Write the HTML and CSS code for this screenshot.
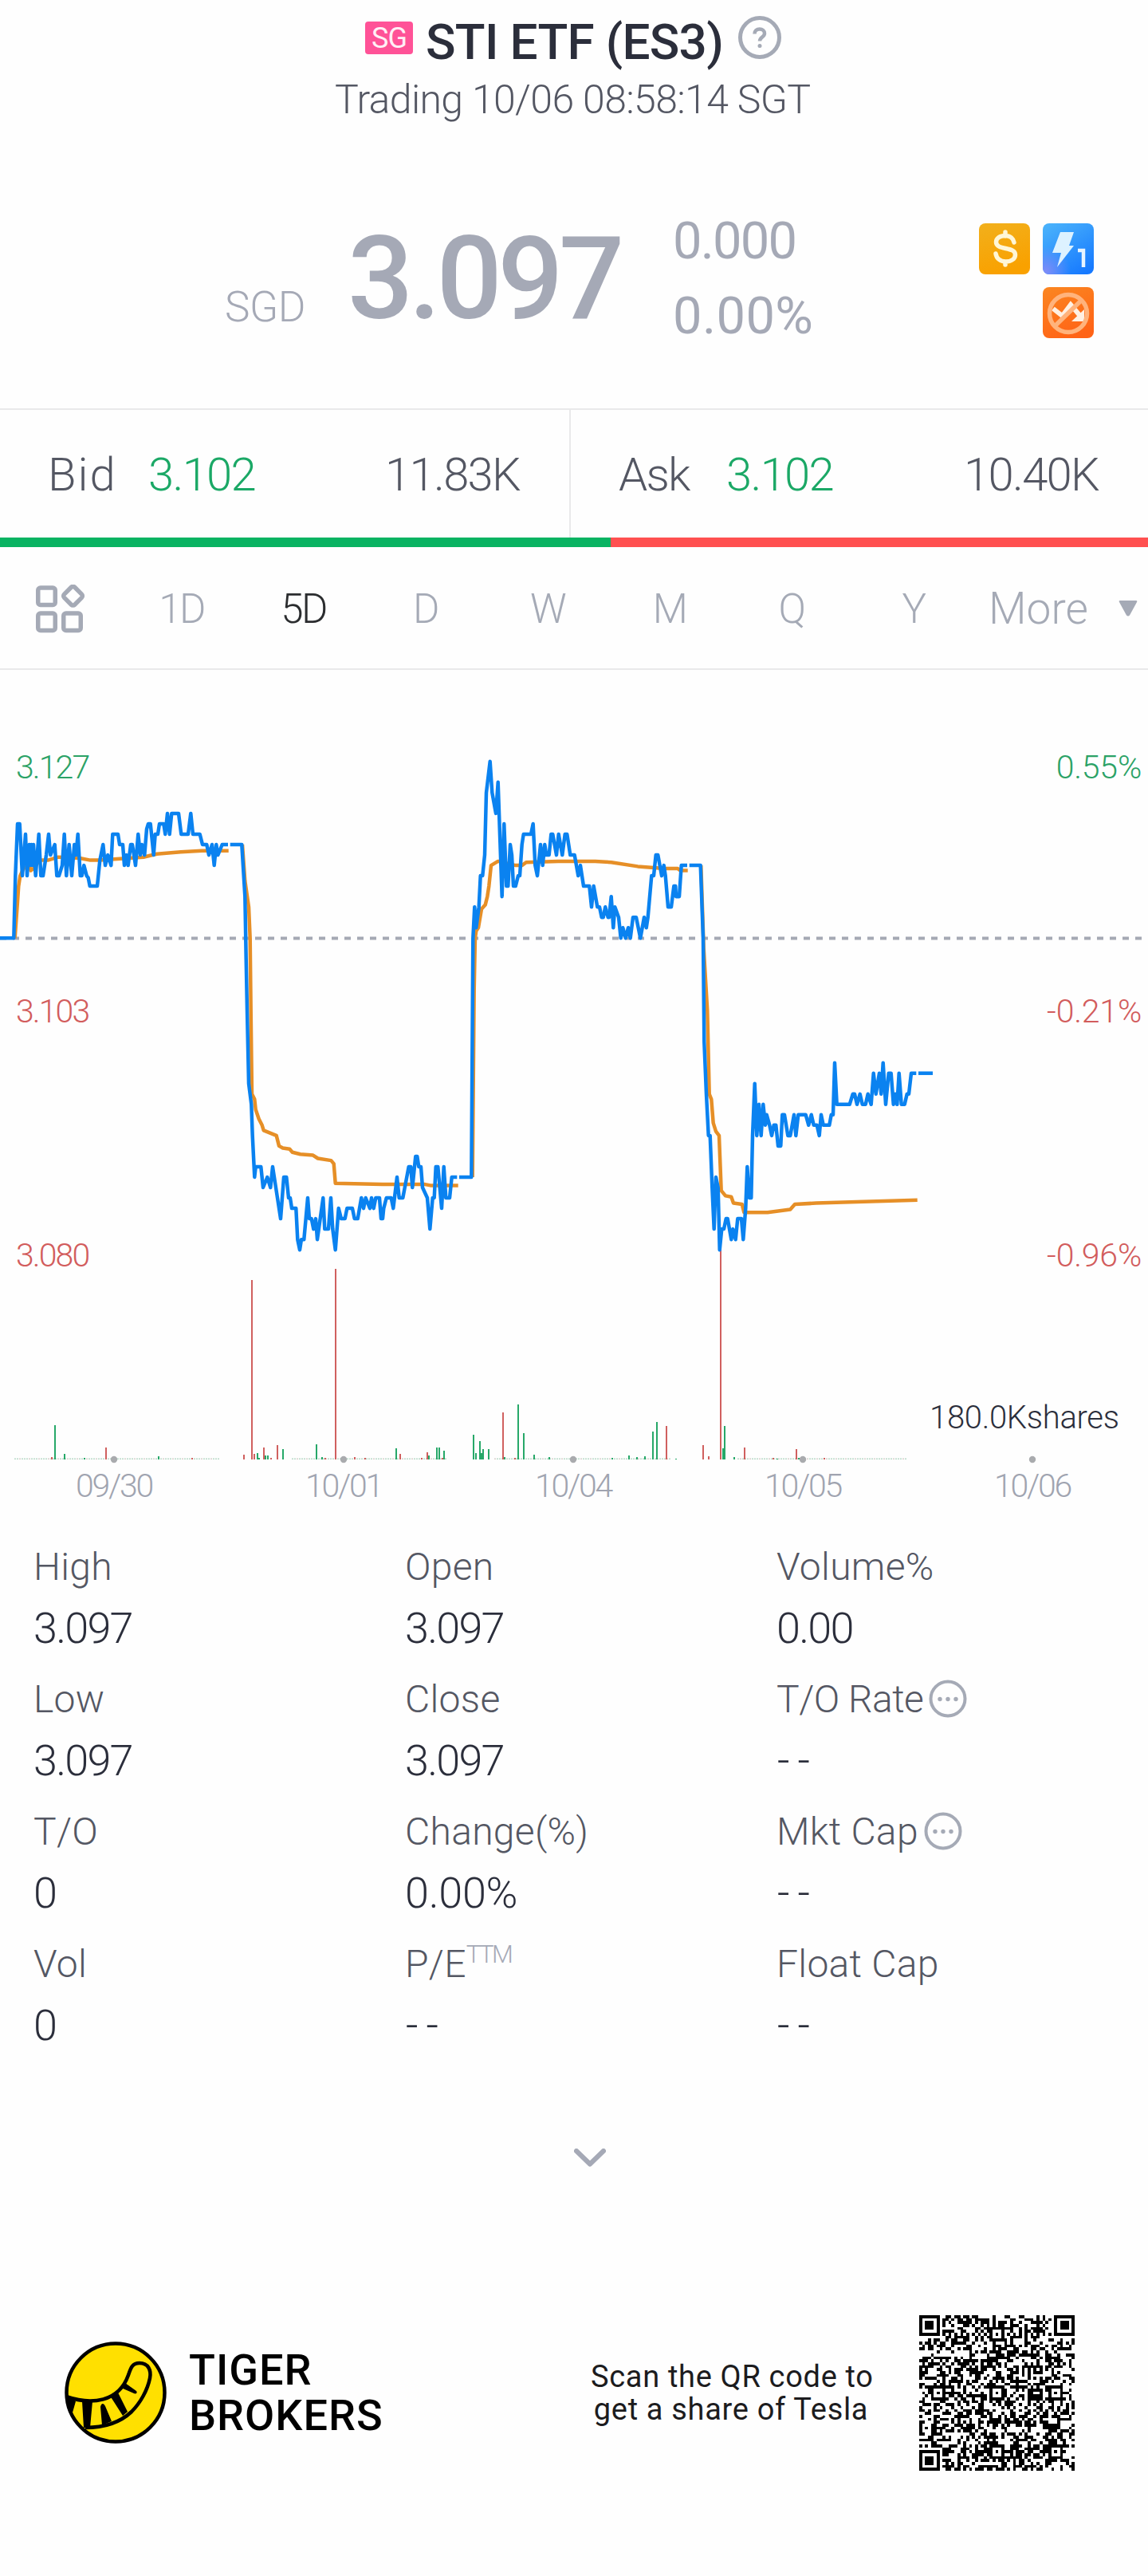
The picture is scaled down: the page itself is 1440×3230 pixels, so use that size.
FILE: index.html
```html
<!DOCTYPE html>
<html lang="en">
<head>
	<title>STI ETF (ES3)</title>
	<meta charset="utf-8">
	<meta name="viewport" content="width=device-width, initial-scale=1.0">
	<link rel="stylesheet" href="styles.css">
</head>
<body>
	<div class="header">
		<div class="titlerow">
			<span class="badge">SG</span>
			<h1>STI ETF (ES3)</h1>
			<svg class="help" width="54" height="54" viewBox="0 0 54 54">
				<circle cx="27" cy="27" r="24.5" fill="none" stroke="#a5aab6" stroke-width="5"/>
				<path d="M20.5 22.5c0-4 2.8-6 6.3-6s6.2 2.1 6.2 5.5c0 4.5-6 4.7-6 9.6" fill="none" stroke="#a5aab6" stroke-width="4.5"/>
				<circle cx="27" cy="37.5" r="2.5" fill="#a5aab6"/>
			</svg>
		</div>
		<div class="status">Trading 10/06 08:58:14 SGT</div>
	</div>

	<div class="price">
		<div class="currency">SGD</div>
		<div class="last">3.097</div>
		<div class="change">
			<div>0.000</div>
			<div class="percent">0.00%</div>
		</div>
		<div class="tags">
			<svg width="64" height="64" viewBox="0 0 64 64">
				<defs>
					<linearGradient id="gold" x1="0" y1="0" x2="0.3" y2="1">
						<stop offset="0" stop-color="#f2b01c"/>
						<stop offset="1" stop-color="#f9a100"/>
					</linearGradient>
				</defs>
				<rect width="64" height="64" rx="8" fill="url(#gold)"/>
				<path d="M44 24c-1-5-5-8.500-11-8.500-7 0-11.500 3.300-11.500 8 0 11 24 5 24 16 0 5-5 8.500-12 8.500S22 44 21 38M33 11v5M33 48v4" fill="none" stroke="#fff6d6" stroke-width="5.500" stroke-linecap="round"/>
			</svg>
			<svg width="64" height="64" viewBox="0 0 64 64">
				<defs>
					<linearGradient id="sky" x1="0.2" y1="0" x2="0.8" y2="1">
						<stop offset="0" stop-color="#48b0fb"/>
						<stop offset="1" stop-color="#1679ff"/>
					</linearGradient>
					<radialGradient id="haze" cx="0.05" cy="0.95" r="0.5">
						<stop offset="0" stop-color="#7f8cf8"/>
						<stop offset="1" stop-color="#7f8cf8" stop-opacity="0"/>
					</radialGradient>
				</defs>
				<rect width="64" height="64" rx="8" fill="url(#sky)"/>
				<rect width="64" height="64" rx="8" fill="url(#haze)"/>
				<path d="M22 11h17l-6 17h6L18 55l5-18H12z" fill="#ddf2ff"/>
				<path d="M44 34h7v21" fill="none" stroke="#e8f4ff" stroke-width="4.5"/>
			</svg>
			<svg class="noshort" width="64" height="64" viewBox="0 0 64 64">
				<defs>
					<linearGradient id="fire" x1="0.2" y1="0" x2="0.6" y2="1">
						<stop offset="0" stop-color="#fb8420"/>
						<stop offset="1" stop-color="#ff6316"/>
					</linearGradient>
				</defs>
				<rect width="64" height="64" rx="8" fill="url(#fire)"/>
				<path d="M13 27l11.500 9L35 22l11 13" fill="none" stroke="#fff0e2" stroke-width="6"/>
				<path d="M52 28v15H36z" fill="#fff0e2"/>
				<circle cx="32" cy="33" r="23.5" fill="none" stroke="#ffb37c" stroke-width="5.5"/>
				<path d="M16 48l32-31" stroke="#ffb37c" stroke-width="5.5"/>
			</svg>
		</div>
	</div>

	<div class="quotes">
		<div class="quote">
			<span class="side">Bid</span>
			<span class="up">3.102</span>
			<span class="size">11.83K</span>
		</div>
		<div class="quote ask">
			<span class="side">Ask</span>
			<span class="up">3.102</span>
			<span class="size">10.40K</span>
		</div>
	</div>
	<div class="ratio">
		<div class="buyers"></div>
		<div class="sellers"></div>
	</div>

	<div class="tabs">
		<svg class="layout" width="62" height="62" viewBox="0 0 62 62" fill="none" stroke="#a5aab6" stroke-width="5.5">
			<rect x="2.750" y="4" width="21.5" height="21.5" rx="3"/>
			<rect x="2.750" y="36" width="21.5" height="21.5" rx="3"/>
			<rect x="34.750" y="36" width="21.5" height="21.5" rx="3"/>
			<rect x="37.250" y="5" width="18.5" height="18.5" rx="3" transform="rotate(45 46.5 14.3)"/>
		</svg>
		<div class="tab">1D</div>
		<div class="tab current">5D</div>
		<div class="tab">D</div>
		<div class="tab">W</div>
		<div class="tab">M</div>
		<div class="tab">Q</div>
		<div class="tab">Y</div>
		<div class="more">More</div>
		<svg class="caret" width="24" height="20" viewBox="0 0 24 20"><path d="M2 0h20q2 0 1 2L14 18.500q-2 2-4 0L1 2Q0 0 2 0z" fill="#a5aab6"/></svg>
	</div>

	<svg class="chart" width="1440" height="1084" viewBox="0 840 1440 1084">
		<path d="M0 1176.500H1440" stroke="#a5a9b4" stroke-width="4" stroke-dasharray="8 8"/>
		<g id="volume"></g>
		<g id="average" fill="none" stroke="#e68f27" stroke-width="4.5" stroke-linejoin="round"></g>
		<g id="line" fill="none" stroke="#0a82f0" stroke-width="4.5" stroke-linejoin="round"></g>
		<g class="axis">
			<text class="gain" x="20" y="976">3.127</text>
			<text class="loss" x="20" y="1282">3.103</text>
			<text class="loss" x="20" y="1588">3.080</text>
		</g>
		<g class="axis right">
			<text class="gain" x="1432" y="976">0.55%</text>
			<text class="loss" x="1432" y="1282">-0.21%</text>
			<text class="loss" x="1432" y="1588">-0.96%</text>
		</g>
		<text class="shares" x="1166" y="1791">180.0Kshares</text>
		<g fill="#a9abae">
			<circle cx="143" cy="1830" r="4.2"/>
			<circle cx="431" cy="1830" r="4.2"/>
			<circle cx="719" cy="1830" r="4.2"/>
			<circle cx="1007" cy="1830" r="4.2"/>
			<circle cx="1295" cy="1830" r="4.2"/>
		</g>
		<g class="dates">
			<text x="143" y="1877">09/30</text>
			<text x="431" y="1877">10/01</text>
			<text x="719" y="1877">10/04</text>
			<text x="1007" y="1877">10/05</text>
			<text x="1295" y="1877">10/06</text>
		</g>
	</svg>

	<div class="stats">
		<div class="stat"><div class="label">High</div><div class="value">3.097</div></div>
		<div class="stat"><div class="label">Open</div><div class="value">3.097</div></div>
		<div class="stat"><div class="label">Volume%</div><div class="value">0.00</div></div>
		<div class="stat"><div class="label">Low</div><div class="value">3.097</div></div>
		<div class="stat"><div class="label">Close</div><div class="value">3.097</div></div>
		<div class="stat">
			<div class="label rate">T/O Rate
				<svg class="dots" width="48" height="48" viewBox="0 0 48 48"><circle cx="24" cy="24" r="21.5" fill="none" stroke="#a5aab6" stroke-width="4"/><g fill="#a5aab6"><circle cx="14" cy="24.5" r="2.7"/><circle cx="24" cy="24.5" r="2.7"/><circle cx="34" cy="24.5" r="2.7"/></g></svg>
			</div>
			<div class="value none">--</div>
		</div>
		<div class="stat"><div class="label">T/O</div><div class="value">0</div></div>
		<div class="stat"><div class="label">Change(%)</div><div class="value percent">0.00%</div></div>
		<div class="stat">
			<div class="label">Mkt Cap
				<svg class="dots" width="48" height="48" viewBox="0 0 48 48"><circle cx="24" cy="24" r="21.5" fill="none" stroke="#a5aab6" stroke-width="4"/><g fill="#a5aab6"><circle cx="14" cy="24.5" r="2.7"/><circle cx="24" cy="24.5" r="2.7"/><circle cx="34" cy="24.5" r="2.7"/></g></svg>
			</div>
			<div class="value none">--</div>
		</div>
		<div class="stat"><div class="label">Vol</div><div class="value">0</div></div>
		<div class="stat"><div class="label">P/E<span class="ttm">TTM</span></div><div class="value none">--</div></div>
		<div class="stat"><div class="label">Float Cap</div><div class="value none">--</div></div>
	</div>

	<div class="expand">
		<svg width="40" height="24" viewBox="0 0 40 24"><path d="M3 3l17 16.500L37 3" fill="none" stroke="#a5a9b6" stroke-width="6" stroke-linecap="round" stroke-linejoin="round"/></svg>
	</div>

	<div class="footer">
		<svg class="logo" width="128" height="128" viewBox="0 0 128 128">
			<circle cx="64" cy="64" r="61.500" fill="#ffe000" stroke="#000" stroke-width="4.5"/>
			<path d="M2 69C34 80 68 76 80 42c3-9 5-15 14-15 11 0 15 9 13 19-3 15-12 31-23 42-16 15-36 20-58 20" fill="none" stroke="#000" stroke-width="4.5"/>
			<path d="M2 67l12 8-4 14-6-6zM22 75h13l-3 33h-8zM45 82c1-5 4-5 6-1l8 19-12 5zM57 68l9-6 13 26-6 5zM71 58l5-6 14 10c2 3-1 4-3 3z"/>
		</svg>
		<div class="brand">TIGER<br>BROKERS</div>
		<div class="scan">Scan the QR code to<br>get a share of Tesla</div>
		<svg class="qr" width="195" height="195" viewBox="0 0 53 53" shape-rendering="crispEdges"><path id="qr"/></svg>
	</div>

	<script src="chart.js"></script>
</body>
</html>
```
FILE: styles.css
```css
*{
	padding: 0;
	margin: 0;
	box-sizing: border-box;
}
body{
	width: 1440px;
	height: 3230px;
	font-family: Roboto, sans-serif;
	font-weight: 350;
	color: #545763;
	background-color: #fefefe;
}
svg{
	display: block;
	flex-shrink: 0;
}
.titlerow{
	height: 94px;
	padding-left: 458px;
	display: flex;
	align-items: center;
}
.badge{
	width: 60px;
	height: 41px;
	border-radius: 4px;
	background-color: #ff5297;
	color: #fff0f6;
	font-size: 36px;
	font-weight: 400;
	line-height: 43px;
	letter-spacing: -1px;
	text-align: center;
}
h1{
	width: 392px;
	margin-left: 16px;
	padding-top: 10px;
	font-size: 62px;
	font-weight: 500;
	letter-spacing: -.7px;
	white-space: nowrap;
	color: #2b2e3b;
}
.status{
	height: 60px;
	padding-left: 420px;
	font-size: 50px;
	line-height: 62px;
	letter-spacing: -.65px;
	white-space: nowrap;
}
.price{
	height: 358px;
	display: flex;
	color: #a5a9b6;
}
.currency{
	width: 154px;
	margin-left: 282px;
	padding-top: 201px;
	font-size: 53px;
	line-height: 60px;
	letter-spacing: -.5px;
}
.last{
	width: 408px;
	padding-top: 115px;
	font-size: 145px;
	font-weight: 500;
	line-height: 160px;
	letter-spacing: -5.6px;
}
.change{
	width: 384px;
	padding-top: 101px;
	font-size: 65px;
	font-weight: 450;
	line-height: 94px;
	letter-spacing: -1.8px;
}
.change .percent{
	letter-spacing: .4px;
}
.tags{
	display: grid;
	grid-template-columns: 64px 64px;
	gap: 16px;
	align-content: start;
	padding-top: 126px;
}
.noshort{
	grid-column: 2;
}
.quotes{
	height: 162px;
	display: flex;
	border-top: 2px solid #e9e9ea;
	font-size: 58px;
	line-height: 162px;
}
.quote{
	width: 716px;
	height: 160px;
	padding: 0 62px 0 60px;
	display: flex;
	border-right: 2px solid #e9e9ea;
}
.side{
	width: 126px;
	letter-spacing: 2px;
}
.up{
	color: #1ba866;
	letter-spacing: -1.7px;
}
.size{
	margin-left: auto;
	letter-spacing: -1.7px;
}
.ask{
	width: 724px;
	padding-left: 60px;
	border-right: none;
}
.ask .side{
	width: 135px;
	letter-spacing: -1.8px;
}
.ratio{
	height: 12px;
	display: flex;
}
.buyers{
	width: 766px;
	background-color: #09b362;
}
.sellers{
	flex: 1;
	background-color: #ff5050;
}
.tabs{
	height: 154px;
	padding-top: 2px;
	display: flex;
	align-items: center;
	border-bottom: 2px solid #e9e9ea;
	font-size: 51px;
	color: #a5aab6;
}
.layout{
	margin: 2px 44px 0 45px;
}
.tab{
	width: 153px;
	text-align: center;
	letter-spacing: -2.6px;
}
.current{
	color: #2b2d2f;
}
.more{
	width: 163px;
	margin-left: 18px;
	font-size: 55px;
}
.axis{
	font-size: 41px;
	letter-spacing: -1.9px;
}
.right{
	text-anchor: end;
	letter-spacing: -.2px;
}
.gain{
	fill: #2ba266;
}
.loss{
	fill: #d25c5c;
}
.shares{
	font-size: 40px;
	letter-spacing: -.3px;
	fill: #2b2e3b;
}
.dates{
	font-size: 41px;
	letter-spacing: -2.3px;
	text-anchor: middle;
	fill: #a0a4b0;
}
.stats{
	display: grid;
	grid-template-columns: 466px 466px 1fr;
	grid-auto-rows: 166px;
	padding-left: 42px;
}
.label{
	display: flex;
	align-items: center;
	height: 80px;
	font-size: 48px;
	letter-spacing: .3px;
}
.rate{
	letter-spacing: -.5px;
}
.value{
	height: 74px;
	font-size: 54px;
	line-height: 76px;
	letter-spacing: -1.8px;
	color: #2b2e3b;
}
.value.percent{
	letter-spacing: -.3px;
}
.value.none{
	padding-left: 1px;
	letter-spacing: 10px;
}
.dots{
	margin-left: 7px;
}
.ttm{
	align-self: flex-start;
	margin-top: 7px;
	font-size: 31px;
	font-weight: 300;
	line-height: 44px;
	letter-spacing: -2.5px;
	color: #a5a9b6;
}
.expand{
	height: 236px;
	padding-left: 720px;
	display: flex;
	align-items: center;
}
.footer{
	height: 352px;
	display: flex;
	align-items: center;
	color: #000;
}
.logo{
	margin-left: 81px;
}
.brand{
	width: 504px;
	margin-left: 28px;
	font-size: 54px;
	font-weight: 500;
	line-height: 57px;
	letter-spacing: 1px;
}
.scan{
	width: 352px;
	padding-top: 2px;
	margin-right: 60px;
	font-size: 38px;
	font-weight: 400;
	line-height: 41px;
	letter-spacing: .68px;
	text-align: center;
	white-space: nowrap;
	color: #1c1c1e;
}
```
FILE: chart.js
```javascript
// every part holds its own x origin and scale, points are "x,ticks from previous close"
var BASE = 1176.3;
var TICK = 13.03;

var price = [
	{x: 0, k: 1/3, p: '0,0 52,0 58,6 66,11 74,11 84,6 96,10 102,6 110,9 114,7 118,9 122,7 126,9 134,6 146,10 154,6 162,6 174,8 183,10 190,8 206,9 214,6 222,6 234,7 242,10 250,6 260,9 270,6 280,9 286,8 293,10 302,6 308,6 316,7 326,6 332,5.8 338,5 366,5 376,7.5 388,9 396,7 406,8 418,7 424,10 444,10 450,9 462,9 468,7 476,8 482,7 492,9 498,9 510,7 520,10 528,8 534,9 544,8 552,10.5 558,11 566,11 578,8 584,10 594,10 600,11 616,11 622,10 630,12 638,10 646,12 672,12 682,10 708,10 718,12 726,10 752,10 762,9 778,9 786,8 798,9 806,7 814,9 820,8 836,9 858,9'},
	{x: 0, k: 1/3, p: '866,9 910,9 922,4 926,-2 930,-7 936,-14 946,-16 950,-19 958,-23 962,-22 982,-22 990,-24 1006,-23 1018,-24 1026,-22 1044,-25 1056,-27 1068,-23 1078,-23 1086,-25 1092,-25 1098,-26 1114,-26 1120,-29 1128,-30 1134,-29 1144,-29 1158,-25 1164,-27 1172,-27 1180,-28 1188,-27 1194,-29 1216,-25 1222,-28 1236,-28 1245,-25 1252,-28 1262,-30 1274,-26 1284,-27 1298,-27 1306,-26 1326,-26 1334,-27 1346,-27 1360,-25 1368,-26 1376,-25 1392,-26 1398,-25 1406,-26 1414,-25 1428,-25 1434,-27 1440,-27 1444,-26 1454,-25 1472,-25 1480,-26 1494,-23 1502,-25 1516,-25 1538,-22 1546,-22 1552,-24 1564,-21 1570,-21 1576,-22 1584,-22 1590,-24 1608,-25 1618,-28 1628,-25 1634,-25 1640,-22 1648,-22 1662,-26 1670,-22 1678,-25 1692,-25 1700,-23 1720,-23'},
	{x: 480, k: 1/3, p: '288,-23 334,-23 340,0 346,3 352,1 362,3 368,6 376,6 384,8 390,14 404,17 412,14 426,12 434,15 449,4 457,11 466,5 472,5 480,9 486,8 492,5 500,5 510,6 516,6 524,9 530,10 558,10 566,11 574,7 582,6 594,9 602,7 610,9 616,8 626,8 634,10 640,10 654,8 662,10 676,8 686,10 694,10 706,8 722,8 736,6 744,7 756,5 778,5 786,3 794,5 808,3 816,3 824,2 830,2 838,3 848,2 852,2 860,4 868,1 874,3 888,2 896,0 904,1 914,0 924,1 932,0 942,2 954,2 970,0 984,2 992,1 998,2 1012,6 1020,6 1028,8 1036,8 1050,6 1058,7 1064,6 1074,3 1086,3 1096,5 1102,5 1104,4 1116,4 1124,7 1146,7'},
	{x: 480, k: 1/3, p: '1154,7 1196,7 1206,0 1210,-10 1218,-15 1226,-19 1232,-19 1240,-24 1247,-28 1254,-23 1262,-24 1268,-30 1276,-28 1284,-28 1292,-27 1298,-27 1312,-29 1318,-28 1328,-29 1336,-27 1350,-27 1357,-29 1366,-26 1372,-22 1380,-25 1387,-25 1392,-19 1400,-14 1408,-19 1416,-16 1424,-19 1432,-16 1440,-18 1445,-17 1456,-18 1464,-19 1472,-18 1480,-18 1488,-20 1498,-20 1504,-17 1512,-17 1525,-19 1534,-19 1548,-17 1555,-19 1564,-17 1592,-17 1603,-18 1613,-17 1622,-18 1634,-18 1643,-19 1650,-17 1658,-18 1681,-18 1688,-17 1695,-17 1701,-12 1709,-16 1757,-16 1769,-15 1776,-15 1785,-16 1796,-15 1805,-16 1817,-16 1826,-15 1838,-16 1847,-13 1856,-15 1869,-13 1876,-15 1883,-12 1893,-16 1904,-13 1913,-13 1922,-16 1929,-15 1936,-16 1943,-13 1952,-16 1964,-16 1973,-15 1980,-15 1989,-13 2008,-13'},
	{x: 480, k: 1/3, p: '2016,-13 2070,-13'}
];

var average = [
	{x: 0, k: 1/3, p: '56,0 66,3.5 70,5 76,6 90,6.8 104,6.7 112,6.9 116,6.5 126,6.7 150,7.5 180,7.5 220,7.8 300,7.7 340,7.5 375,7.5 430,7.6 540,7.8 590,8.1 680,8.3 760,8.4 860,8.4'},
	{x: 0, k: 1/3, p: '912,9 922,5.5 936,3 941,0 944,-7 948,-15 958,-15.5 962,-16.5 974,-17.4 986,-18 992,-18.5 1040,-19 1050,-20 1064,-20.2 1090,-20.3 1100,-20.6 1130,-20.8 1178,-20.9 1196,-21.2 1246,-21.4 1256,-21.7 1262,-23.6 1440,-23.7 1600,-23.7 1620,-23.8 1724,-23.8'},
	{x: 480, k: 1/3, p: '338,-23 344,-5 348,0 352,.7 360,1 372,2.8 386,3.2 394,4 400,5 408,7 434,7.4 500,7 524,7 540,7.3 660,7.4 800,7.4 860,7.3 960,6.9 1060,6.7 1110,6.7 1120,6.5 1148,6.5'},
	{x: 480, k: 1/3, p: '1198,7 1208,-1 1222,-7 1229,-15 1237,-15.5 1244,-17.8 1254,-18.6 1266,-19 1274,-24.3 1290,-24.8 1312,-24.9 1320,-25.5 1352,-25.6 1360,-26.4 1448,-26.4 1534,-26.1 1551,-25.6 1631,-25.5 2012,-25.2'}
];

// x and height of the bars, sorted by the direction of the candle
var up = '69,43 81,7 106,2 199,4 323,8 325,2 333,5 336,5 355,13 397,19 404,3 497,14 538,5 548,15 551,15 557,11 594,31 597,8 602,23 604,8 606,13 613,13 633,3 650,69 657,33 670,6 689,3 768,2 789,5 799,3 809,4 819,35 824,47 848,1 907,14 909,42 921,3 975,1 1002,2';
var down = '65,3 133,15 241,2 306,6 316,225 319,7 331,15 340,2 348,18 408,2 421,239 445,3 458,2 502,7 529,2 536,9 555,2 631,59 646,2 836,42 882,18 889,4 904,269 934,15 970,2 999,13 1034,2';

function drawLine (id, parts) {
	var html = '';
	parts.forEach(function (part) {
		var points = part.p.split(' ').map(function (pair) {
			var xy = pair.split(',');
			return (part.x + xy[0] * part.k).toFixed(1) + ',' + (BASE - xy[1] * TICK).toFixed(1);
		});
		html += '<polyline points="' + points.join(' ') + '"/>';
	});
	document.getElementById(id).innerHTML = html;
}

function drawBars (bars, color) {
	return bars.split(' ').map(function (bar) {
		var xh = bar.split(',');
		return '<rect x="' + (xh[0] - 1) + '" y="' + (1830 - xh[1]) + '" width="2" height="' + xh[1] + '" fill="' + color + '"/>';
	}).join('');
}

function drawQuietMinutes () {
	var html = '';
	[[18, 276], [366, 560], [620, 840], [925, 1138]].forEach(function (day) {
		for (var x = day[0]; x < day[1]; x += 3) {
			html += '<rect x="' + x + '" y="1828.5" width="2" height="1.5" fill="' + (x % 4 ? '#b9d9c8' : '#d8cfcb') + '"/>';
		}
	});
	return html;
}

function drawCode () {
	var size = 53;
	var seed = 90;
	var d = '';

	function inFinder (x, y) {
		return (x < 8 && y < 8) || (x > 44 && y < 8) || (x < 8 && y > 44);
	}
	function ring (x, y, cx, cy, r) {
		return Math.max(Math.abs(x - cx), Math.abs(y - cy)) <= r;
	}

	for (var y = 0; y < size; y++) {
		for (var x = 0; x < size; x++) {
			seed = (seed * 1103515245 + 12345) % 2147483648;
			var on = (seed >> 16) % 2 == 1;
			if (x == 6 || y == 6) {
				on = (x + y) % 2 == 0;
			}
			[[6, 26], [26, 6], [26, 26], [46, 26], [26, 46], [46, 46]].forEach(function (c) {
				if (ring(x, y, c[0], c[1], 2)) {
					on = !ring(x, y, c[0], c[1], 1) || ring(x, y, c[0], c[1], 0);
				}
			});
			if (inFinder(x, y)) {
				on = false;
				[[3, 3], [49, 3], [3, 49]].forEach(function (c) {
					if (ring(x, y, c[0], c[1], 3)) {
						on = !ring(x, y, c[0], c[1], 2) || ring(x, y, c[0], c[1], 1);
					}
				});
			}
			if (on) {
				d += 'M' + x + ' ' + y + 'h1v1h-1z';
			}
		}
	}
	document.getElementById('qr').setAttribute('d', d);
}

drawLine('average', average);
drawLine('line', price);
document.getElementById('volume').innerHTML = drawQuietMinutes() + drawBars(up, '#27a869') + drawBars(down, '#d0605f');
drawCode();
```
